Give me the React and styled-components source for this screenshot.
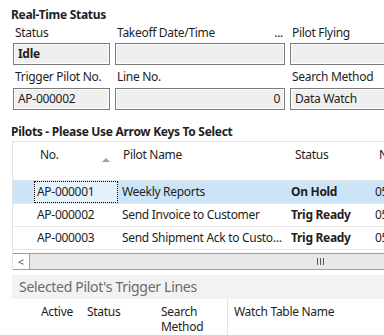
import React from "react";
import styled, { createGlobalStyle } from "styled-components";

const Global = createGlobalStyle`
  html, body { margin: 0; padding: 0; background: #fff; overflow: hidden; }
  body { font-family: "Noto Sans", "Open Sans", sans-serif; font-size: 12px; color: #1e1e1e; }
`;

const Page = styled.div`
  width: 384px;
  height: 335px;
  overflow: hidden;
`;

const SectionTitle = styled.div`
  font-weight: 700;
  font-size: 12px;
  padding: 6px 0 0 11px;
  height: 18px;
  line-height: 18px;
  white-space: nowrap;
  letter-spacing: -0.3px;
`;

const Form = styled.div`
  display: grid;
  grid-template-columns: 97px 170px 120px;
  column-gap: 5px;
  padding: 0 0 0 13px;
  width: 420px;
`;

const Field = styled.div`
  display: flex;
  flex-direction: column;
`;

const Label = styled.div`
  height: ${(p) => (p.$second ? 20 : 19)}px;
  line-height: 17px;
  padding: 0 2px;
  white-space: nowrap;
  display: flex;
  justify-content: space-between;
  letter-spacing: -0.3px;
`;

const Box = styled.div`
  height: 20px;
  border: 1px solid #7a7a7a;
  background: #efefef;
  box-shadow: inset 0 0 0 1px #fff;
  padding: 0 4px;
  line-height: 20px;
  font-weight: ${(p) => (p.$bold ? 700 : 400)};
  text-align: ${(p) => (p.$right ? "right" : "left")};
  white-space: nowrap;
  margin-bottom: 3px;
  letter-spacing: -0.3px;
`;

const GridTitle = styled(SectionTitle)`
  padding-top: 10px;
`;

const Grid = styled.div`
  margin: 0 0 0 12px;
  border-top: 1px solid #e3e3e3;
  border-left: 1px solid #e3e3e3;
  width: 400px;
`;

const cols = "21px 84px 171px 84px 40px";

const HeaderRow = styled.div`
  display: grid;
  grid-template-columns: ${cols};
  height: 38px;
  border-bottom: 1px solid #e3e3e3;
`;

const HeadCell = styled.div`
  padding: 4px 0 0 ${(p) => p.$pad || 6}px;
  line-height: 18px;
  color: #1e1e1e;
  white-space: nowrap;
  position: relative;
  letter-spacing: -0.3px;
`;

const SortArrow = styled.span`
  position: absolute;
  right: 8px;
  top: 16px;
  width: 0;
  height: 0;
  border-left: 4px solid transparent;
  border-right: 4px solid transparent;
  border-bottom: 4px solid #a0a0a0;
`;

const Row = styled.div`
  display: grid;
  grid-template-columns: ${cols};
  height: 22px;
  line-height: 22px;
  border-bottom: 1px solid #e8e8e8;
  background: ${(p) => (p.$selected ? "#cce4f7" : "#fff")};
`;

const Cell = styled.div`
  padding-left: ${(p) => p.$pad || 4}px;
  white-space: nowrap;
  overflow: hidden;
  font-weight: ${(p) => (p.$bold ? 700 : 400)};
  letter-spacing: -0.3px;
  ${(p) =>
    p.$focus &&
    `background: #e5f1fb; outline: 1px dotted #000; outline-offset: -1px;`}
`;

const Scrollbar = styled.div`
  display: flex;
  height: 15px;
  background: #e8e8e8;
  border-top: 1px solid #a0a0a0;
  border-bottom: 1px solid #a0a0a0;
  margin-top: 3px;
`;

const ScrollBtn = styled.div`
  width: 16px;
  background: #fff;
  border-right: 1px solid #a0a0a0;
  display: flex;
  align-items: center;
  justify-content: center;
  color: #555;
  font-size: 11px;
  line-height: 15px;
`;

const Thumb = styled.div`
  flex: 1;
  display: flex;
  align-items: center;
  padding-left: 287px;
`;

const Grip = styled.div`
  display: flex;
  gap: 2px;
  & > span { width: 1px; height: 7px; background: #555; }
`;

const Band = styled.div`
  margin: 5px 0 0 12px;
  height: 24px;
  line-height: 24px;
  background: #f2f2f2;
  color: #6a6a6a;
  font-size: 14px;
  padding-left: 7px;
  white-space: nowrap;
  letter-spacing: -0.3px;
`;

const SubHeader = styled.div`
  display: grid;
  grid-template-columns: 29px 46px 74px 67px 150px;
  margin-left: 12px;
  height: 40px;
`;

const SubCell = styled.div`
  padding: 5px 0 0 ${(p) => p.$pad || 0}px;
  line-height: 15px;
  white-space: nowrap;
  border-right: ${(p) => (p.$divider ? "1px solid #e3e3e3" : "none")};
  letter-spacing: -0.3px;
`;

const rows = [
  { no: "AP-000001", name: "Weekly Reports", status: "On Hold", sel: true },
  { no: "AP-000002", name: "Send Invoice to Customer", status: "Trig Ready" },
  { no: "AP-000003", name: "Send Shipment Ack to Custo...", status: "Trig Ready" },
];

export default function App() {
  return (
    <Page>
      <Global />
      <SectionTitle>Real-Time Status</SectionTitle>
      <Form>
        <Field>
          <Label>Status</Label>
          <Box $bold>Idle</Box>
        </Field>
        <Field>
          <Label>
            <span>Takeoff Date/Time</span>
            <span>...</span>
          </Label>
          <Box />
        </Field>
        <Field>
          <Label>Pilot Flying</Label>
          <Box />
        </Field>
        <Field>
          <Label $second>Trigger Pilot No.</Label>
          <Box>AP-000002</Box>
        </Field>
        <Field>
          <Label $second>Line No.</Label>
          <Box $right>0</Box>
        </Field>
        <Field>
          <Label $second>Search Method</Label>
          <Box>Data Watch</Box>
        </Field>
      </Form>
      <GridTitle>Pilots - Please Use Arrow Keys To Select</GridTitle>
      <Grid>
        <HeaderRow>
          <HeadCell />
          <HeadCell $pad={6}>
            No.
            <SortArrow />
          </HeadCell>
          <HeadCell $pad={5}>Pilot Name</HeadCell>
          <HeadCell $pad={6}>Status</HeadCell>
          <HeadCell $pad={6}>No.</HeadCell>
        </HeaderRow>
        {rows.map((r) => (
          <Row key={r.no} $selected={r.sel}>
            <Cell />
            <Cell $focus={r.sel} $pad={3}>{r.no}</Cell>
            <Cell $pad={4}>{r.name}</Cell>
            <Cell $pad={2} $bold>{r.status}</Cell>
            <Cell $pad={2}>05/01/2019</Cell>
          </Row>
        ))}
        <Scrollbar>
          <ScrollBtn>&lt;</ScrollBtn>
          <Thumb>
            <Grip>
              <span />
              <span />
              <span />
            </Grip>
          </Thumb>
        </Scrollbar>
      </Grid>
      <Band>Selected Pilot's Trigger Lines</Band>
      <SubHeader>
        <SubCell />
        <SubCell>Active</SubCell>
        <SubCell>Status</SubCell>
        <SubCell $divider>
          Search
          <br />
          Method
        </SubCell>
        <SubCell $pad={6}>Watch Table Name</SubCell>
      </SubHeader>
    </Page>
  );
}
